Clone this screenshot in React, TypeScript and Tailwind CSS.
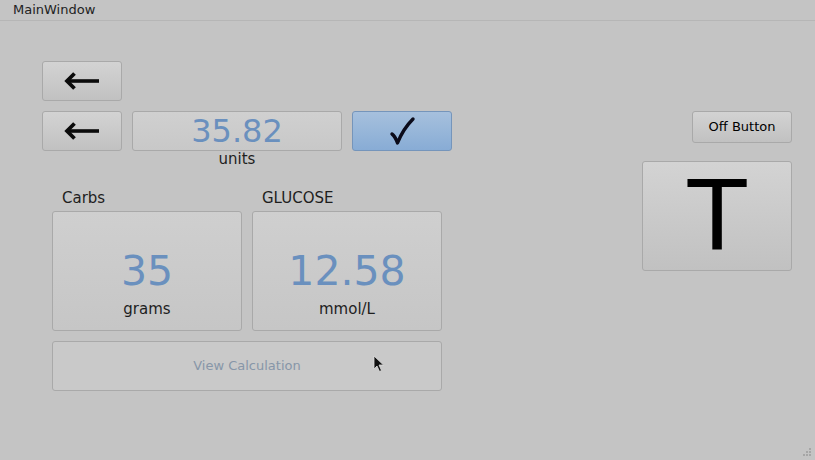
import React from 'react';

const btn =
  'rounded-[3px] border border-[#a9a9a9] bg-gradient-to-b from-[#d3d3d3] to-[#c1c1c1] flex items-center justify-center text-black';

function ArrowLeft() {
  return (
    <svg width="38" height="20" viewBox="0 0 38 20">
      <path d="M5 10 H36" stroke="#0b0b0b" strokeWidth="3.6" fill="none" />
      <path d="M11.5 2.5 L4 10 L11.5 17.5" stroke="#0b0b0b" strokeWidth="3.8" fill="none" strokeLinejoin="miter" />
    </svg>
  );
}

function Check() {
  return (
    <svg width="28" height="30" viewBox="0 0 28 30">
      <path d="M4 18 Q7 20 9.5 27 Q15 13 25 3" stroke="#0b0b1a" strokeWidth="3.4" fill="none" strokeLinecap="round" strokeLinejoin="round" />
      <path d="M6 20 Q8 22 9.5 26" stroke="#0b0b1a" strokeWidth="2" fill="none" strokeLinecap="round" />
    </svg>
  );
}

function ValueBox({ label, value, unit }: { label: string; value: string; unit: string }) {
  return (
    <div className="flex flex-col w-[190px]">
      <div className="pl-[10px] text-[15px] leading-[18px] text-[#1e1e1e] mb-[4px]">{label}</div>
      <div className="h-[120px] rounded-[3px] border border-[#a9a9a9] bg-gradient-to-b from-[#cfcfcf] to-[#c6c6c6] flex flex-col items-center pt-[37px]">
        <div className="text-[41px] leading-[44px] text-[#6a90be]">{value}</div>
        <div className="text-[15px] leading-[18px] mt-[7px] text-[#1e1e1e]">{unit}</div>
      </div>
    </div>
  );
}

export default function App() {
  return (
    <div className="relative w-[815px] h-[460px] overflow-hidden bg-[#c4c4c4] font-['DejaVu_Sans',sans-serif]">
      {/* title bar */}
      <div className="h-[21px] border-b border-[#b6b6b6] pl-[13px] text-[13px] leading-[19px] text-[#222]">
        MainWindow
      </div>

      <div className="flex pt-[40px]">
        {/* left column */}
        <div className="pl-[42px] w-[642px] shrink-0">
          <div className={`${btn} w-[80px] h-[40px]`}>
            <ArrowLeft />
          </div>

          <div className="mt-[10px] flex gap-[10px]">
            <div className={`${btn} w-[80px] h-[40px]`}>
              <ArrowLeft />
            </div>
            <div className="flex flex-col items-center">
              <div className="w-[210px] h-[40px] rounded-[3px] border border-[#a9a9a9] bg-gradient-to-b from-[#d0d0d0] to-[#c8c8c8] flex items-center justify-center text-[32px] leading-none text-[#6a90be]">
                35.82
              </div>
              <div className="text-[15px] leading-[16px] text-[#1e1e1e]">units</div>
            </div>
            <div className="w-[100px] h-[40px] rounded-[3px] border border-[#7595bb] bg-gradient-to-b from-[#a6c0dd] to-[#88acd5] flex items-center justify-center">
              <Check />
            </div>
          </div>

          <div className="mt-[22px] pl-[10px] flex flex-col gap-[10px] w-[400px]">
            <div className="flex gap-[10px]">
              <ValueBox label="Carbs" value="35" unit="grams" />
              <ValueBox label="GLUCOSE" value="12.58" unit="mmol/L" />
            </div>
            <div className="w-[390px] h-[50px] rounded-[3px] border border-[#a9a9a9] bg-[#c9c9c9] flex items-center justify-center text-[13px] text-[#8796a8]">
              View Calculation
            </div>
          </div>
        </div>

        {/* right column */}
        <div className="flex flex-col items-end w-[150px] mt-[50px]">
          <div className={`${btn} w-[100px] h-[32px] text-[13px] text-[#1e1e1e]`}>Off Button</div>
          <div className={`${btn} mt-[18px] w-[150px] h-[110px] text-[96px] leading-none`}>T</div>
        </div>
      </div>

      {/* mouse cursor */}
      <svg className="absolute left-[373px] top-[355px]" width="12" height="18" viewBox="0 0 12 18">
        <path d="M1 1 L1 14 L4 11 L6.5 16.5 L8.5 15.5 L6 10 L10.5 10 Z" fill="#111" stroke="#ddd" strokeWidth="0.8" />
      </svg>

      {/* resize grip */}
      <svg className="absolute right-[3px] bottom-[3px]" width="12" height="12" viewBox="0 0 12 12">
        {[
          [9, 1],
          [6, 4],
          [9, 4],
          [3, 7],
          [6, 7],
          [9, 7],
        ].map(([x, y], i) => (
          <rect key={i} x={x} y={y + 2} width="2" height="2" fill="#a6a6a6" />
        ))}
      </svg>
    </div>
  );
}
